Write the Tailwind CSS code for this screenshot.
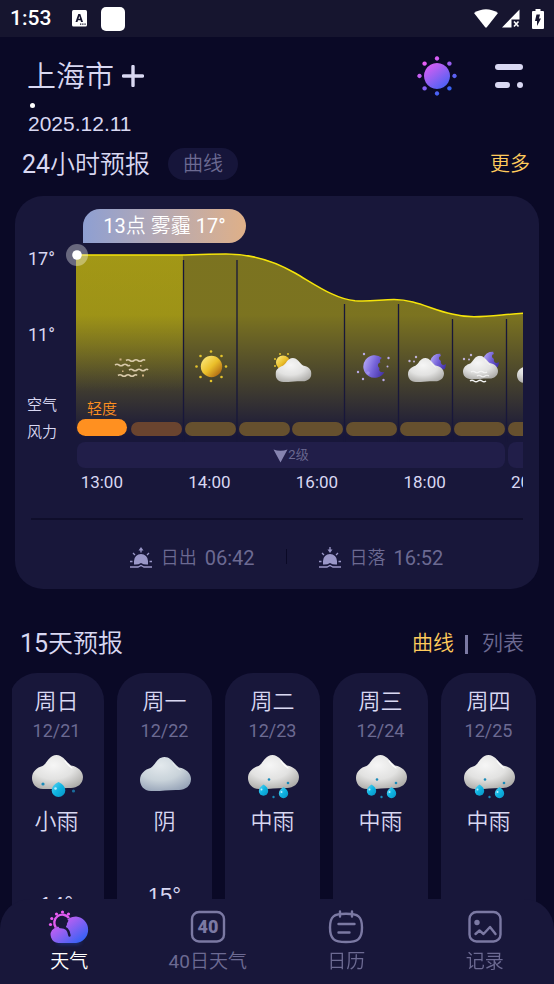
<!DOCTYPE html>
<html lang="zh-CN">
<head>
    <meta charset="UTF-8">
    <meta name="viewport" content="width=device-width, initial-scale=1.0">
    <title>天气</title>
    <script src="https://cdn.jsdelivr.net/npm/@tailwindcss/browser@4"></script>
</head>
<body class="bg-[#0a0926] text-[#d9d8f2] font-['Roboto','Noto_Sans_CJK_SC_DemiLight','Noto_Sans_CJK_SC',sans-serif]">

    <!-- Shared icons -->
    <svg class="absolute w-0 h-0" aria-hidden="true">
        <defs>
            <radialGradient id="cloudFill" cx="0.42" cy="0.3" r="0.75">
                <stop offset="0" stop-color="#f6f6f6"/>
                <stop offset="0.55" stop-color="#e2e2e1"/>
                <stop offset="1" stop-color="#aeadaa"/>
            </radialGradient>
            <radialGradient id="greyCloudFill" cx="0.4" cy="0.25" r="0.8">
                <stop offset="0" stop-color="#e3e9ed"/>
                <stop offset="0.55" stop-color="#c9d3da"/>
                <stop offset="1" stop-color="#97a4b8"/>
            </radialGradient>
            <linearGradient id="goldFill" x1="0.1" y1="0.1" x2="0.9" y2="0.9">
                <stop offset="0" stop-color="#fbe675"/>
                <stop offset="0.5" stop-color="#eabf2a"/>
                <stop offset="1" stop-color="#ad6412"/>
            </linearGradient>
            <linearGradient id="moonFill" x1="0" y1="0.3" x2="1" y2="0.7">
                <stop offset="0" stop-color="#b3a6f5"/>
                <stop offset="0.5" stop-color="#7563d8"/>
                <stop offset="1" stop-color="#4332a8"/>
            </linearGradient>
            <linearGradient id="dropFill" x1="0" y1="0" x2="1" y2="1">
                <stop offset="0" stop-color="#5fd4f2"/>
                <stop offset="0.5" stop-color="#0fb4e2"/>
                <stop offset="1" stop-color="#0893c4"/>
            </linearGradient>
            <linearGradient id="neon" gradientUnits="userSpaceOnUse" x1="8" y1="4" x2="32" y2="36">
                <stop offset="0" stop-color="#f25cf5"/>
                <stop offset="0.45" stop-color="#9a60f2"/>
                <stop offset="1" stop-color="#2c62f6"/>
            </linearGradient>
            <path id="cloudShape" d="M14 38C6.500 38 3 32 3 27C3 20.500 8 16.500 13.500 15C18.500 12 20 4 27.500 4C34 4 37 11 42 14.500C49 15.500 54 20.500 54 26C54 33 48 37 42 37C32 36.500 24 38.500 14 38Z"/>
            <symbol id="cloud" viewBox="3 4 51 34">
                <use href="#cloudShape" fill="url(#cloudFill)"/>
                <path d="M35 10c2 3 4 5 7 7" stroke="#fff" stroke-opacity=".7" stroke-linecap="round" fill="none"/>
            </symbol>
            <symbol id="lightRain" viewBox="0 0 56 48">
                <use href="#cloudShape" fill="url(#cloudFill)"/>
                <path d="M36 10c2 3 4 5 7 7" stroke="#fff" stroke-width="1.200" stroke-linecap="round" fill="none"/>
                <path d="M29.500 31c4.500 2 6.800 5 6.800 8.500a6.800 6.500 0 0 1-13.600 0c0-3.500 2.300-6.500 6.800-8.500z" fill="url(#dropFill)"/>
                <circle cx="26.500" cy="37.500" r="1.300" fill="#b8efff"/>
                <circle cx="14" cy="33" r="1.600" fill="#1a8ab8"/>
                <circle cx="44.500" cy="40" r="1.600" fill="#1a6d9c"/>
            </symbol>
            <symbol id="rain" viewBox="0 0 56 48">
                <use href="#cloudShape" fill="url(#cloudFill)"/>
                <path d="M36 10c2 3 4 5 7 7" stroke="#fff" stroke-width="1.200" stroke-linecap="round" fill="none"/>
                <path d="M18.500 33.500c3 2 4.700 4 4.700 6.500a4.700 4.700 0 0 1-9.400 0c0-2.500 1.700-4.500 4.700-6.500z" fill="url(#dropFill)"/>
                <path d="M38.500 36c3 2 4.700 4 4.700 6.500a4.700 4.700 0 0 1-9.400 0c0-2.500 1.700-4.500 4.700-6.500z" fill="url(#dropFill)"/>
                <circle cx="16.500" cy="38.500" r="1" fill="#b8efff"/>
                <circle cx="36.500" cy="41" r="1" fill="#b8efff"/>
                <circle cx="24" cy="28.500" r="1.300" fill="#1a8ab8"/>
                <circle cx="43" cy="32" r="1.300" fill="#1a8ab8"/>
                <circle cx="28.500" cy="46" r="1.200" fill="#1a8ab8"/>
            </symbol>
            <symbol id="overcast" viewBox="0 0 56 48">
                <use href="#cloudShape" y="2" fill="url(#greyCloudFill)"/>
                <path d="M36 12c2 3 4 5 7 7" stroke="#fff" stroke-opacity=".6" stroke-linecap="round" fill="none"/>
            </symbol>
            <symbol id="moon" viewBox="0 0 22 23">
                <path d="M19 3A11.300 11.300 0 1 0 21.500 17C17 18 15.500 15.500 16.500 13C14 11 14.500 8 17.500 7.500C16.500 5.500 17 4 19 3Z" fill="url(#moonFill)"/>
                <circle cx="5" cy="18" r="1.800" fill="#a89bf0" fill-opacity=".6"/>
            </symbol>
            <symbol id="crescent" viewBox="0 0 16 16">
                <path d="M10.500 0A10 10 0 0 0 0 8L6 16H14.500Q15.800 14 16 10.500Q13 12.500 11.500 10.500Q10.500 9 11 7.500Q8.500 6.500 9 4Q9.500 2.500 11 2.500Q10 1 10.500 0Z" fill="url(#moonFill)"/>
            </symbol>
        </defs>
    </svg>

    <div class="h-screen overflow-hidden">

        <!-- Status bar -->
        <div class="h-[37px] bg-[#16152f] text-white flex items-center pl-[10px] pr-[10px]">
            <span class="text-[21px] font-medium">1:53</span>
            <svg class="ml-[21px]" width="15" height="17" viewBox="0 0 15 17">
                <rect width="15" height="16.500" rx="1.500" fill="#fff"/>
                <path d="M3.500 12L6.300 4h2L11 12H9L8.500 10.300H6L5.500 12zM6.500 8.800h1.600L7.300 6z" fill="#16152f"/>
                <path d="M8 13.500h1.300v1.300H8zM10.200 13.500h1.300v1.300h-1.300zM12.400 13.500h1.300v1.300h-1.300z" fill="#16152f"/>
            </svg>
            <span class="ml-[14px] size-6 rounded-[5px] bg-white"></span>
            <div class="ml-auto flex items-center">
                <svg width="24" height="19" viewBox="0 0 24 19"><path d="M0 4Q12-3.500 24 4L12.800 18.300Q12 19 11.200 18.300Z" fill="#fff"/></svg>
                <svg class="ml-1" width="18" height="19" viewBox="0 0 18 19">
                    <path d="M17.500 0.500V10.500H9.500V18.500H0Z" fill="#fff"/>
                    <path d="M12 12.500l4.500 5M16.500 12.500l-4.500 5" stroke="#fff" stroke-width="1.600"/>
                </svg>
                <svg class="ml-3" width="12" height="20" viewBox="0 0 12 20">
                    <path d="M3.500 0h5v2H11a1 1 0 0 1 1 1v16a1 1 0 0 1-1 1H1a1 1 0 0 1-1-1V3a1 1 0 0 1 1-1h2.500z" fill="#fff"/>
                    <path d="M4.500 5.500h3.500L7 9.500h2L5 17V12H3z" fill="#16152f"/>
                </svg>
            </div>
        </div>

        <!-- City -->
        <header class="mt-[15px] h-12 pl-[27px] pr-[31px] flex items-center">
            <h1 class="pt-1 text-[29px]">上海市</h1>
            <button class="ml-2" aria-label="添加城市">
                <svg width="22" height="22" viewBox="0 0 22 22"><path d="M11 1.500v19M1.500 11h19" stroke="#d9d8f2" stroke-width="3.400" stroke-linecap="round"/></svg>
            </button>
            <button class="ml-auto" aria-label="主题">
                <svg width="40" height="40" viewBox="0 0 40 40" fill="url(#neon)">
                    <path d="M20 7a13 13 0 1 0 .01 0ZM20 .3a2.200 2.200 0 1 0 .01 0ZM20 35.300a2.200 2.200 0 1 0 .01 0ZM2.500 17.800a2.200 2.200 0 1 0 .01 0ZM37.500 17.800a2.200 2.200 0 1 0 .01 0ZM7.600 5.400a2.200 2.200 0 1 0 .01 0ZM32.400 5.400a2.200 2.200 0 1 0 .01 0ZM7.600 30.200a2.200 2.200 0 1 0 .01 0ZM32.400 30.200a2.200 2.200 0 1 0 .01 0Z"/>
                </svg>
            </button>
            <button class="ml-[38px]" aria-label="菜单">
                <svg width="28" height="24" viewBox="0 0 28 24" fill="#d9d8f2">
                    <rect width="28" height="6" rx="3"/><rect y="18" width="15" height="6" rx="3"/><rect x="22" y="18" width="6" height="6" rx="3"/>
                </svg>
            </button>
        </header>
        <div class="pl-7">
            <div class="mt-[3px] ml-0.5 size-[5px] rounded-full bg-white"></div>
            <p class="mt-1 text-[21px] leading-6 font-['Liberation_Sans',sans-serif]">2025.12.11</p>
        </div>

        <!-- 24 hours -->
        <div class="mt-3 h-8 pl-[22px] pr-6 flex items-center">
            <h2 class="pt-0.5 text-[25px]">24小时预报</h2>
            <button class="ml-[18px] h-8 px-[15px] rounded-full bg-[#16153a] text-xl text-[#6c6a92]">曲线</button>
            <a href="#" class="ml-auto text-xl text-[#ffcb5c]">更多</a>
        </div>

        <section class="mt-4 mx-[15px] pt-[13px] rounded-[28px] bg-[#18173a]">
            <div class="flex pr-4">
                <div class="w-12 shrink-0 pl-3 leading-6">
                    <div class="mt-[38px] pl-px text-lg leading-6 whitespace-nowrap">17°</div>
                    <div class="mt-[52px] pl-px text-lg leading-6 whitespace-nowrap">11°</div>
                    <div class="mt-[46px] text-[15px] leading-6">空气</div>
                    <div class="mt-[3px] text-[15px] leading-6">风力</div>
                </div>
                <div class="flex-1 min-w-0 overflow-hidden">
                    <div class="ml-5 w-[163px] h-[34px] rounded-[17px] rounded-bl-none bg-linear-to-r from-[#8e9fd2] to-[#dfb088] text-white text-xl flex items-center justify-center whitespace-nowrap">13点 雾霾 17°</div>
                    <svg class="max-w-none block" width="500" height="199" viewBox="0 0 500 199">
                        <defs>
                            <linearGradient id="area" gradientUnits="userSpaceOnUse" x1="0" y1="12" x2="0" y2="194">
                                <stop offset="0" stop-color="#f5e400" stop-opacity=".45"/>
                                <stop offset=".33" stop-color="#f5e400" stop-opacity=".45"/>
                                <stop offset="1" stop-color="#f5e400" stop-opacity="0"/>
                            </linearGradient>
                            <linearGradient id="areaNow" gradientUnits="userSpaceOnUse" x1="0" y1="12" x2="0" y2="194">
                                <stop offset="0" stop-color="#f5e400" stop-opacity=".32"/>
                                <stop offset=".33" stop-color="#f5e400" stop-opacity=".28"/>
                                <stop offset=".75" stop-color="#f5e400" stop-opacity="0"/>
                            </linearGradient>
                        </defs>
                        <path d="M13 12H110C130 12 145 11 163 11C192 11 214 19.500 232 30C252 41.500 272 56 292 57.800C308 58.800 318 56.500 331 56.500C353 56.500 369 67 389 71C397 73 404 73.800 411 73.800C428 73.800 440 71.500 460 70.300C480 69 490 68 500 68V194H13Z" fill="url(#area)"/>
                        <path d="M13 12H120V194H13Z" fill="url(#areaNow)"/>
                        <path d="M120.500 17V199M174 17V199M281.500 61V199M335.500 61V199M389.500 76V199M443.500 76V199" stroke="#18173a" stroke-width="1.300"/>
                        <path d="M13 12H110C130 12 145 11 163 11C192 11 214 19.500 232 30C252 41.500 272 56 292 57.800C308 58.800 318 56.500 331 56.500C353 56.500 369 67 389 71C397 73 404 73.800 411 73.800C428 73.800 440 71.500 460 70.300C480 69 490 68 500 68" fill="none" stroke="#f5e40a" stroke-width="1.500"/>
                        <circle cx="14" cy="12" r="11" fill="#fff" fill-opacity=".35"/>
                        <circle cx="14" cy="12" r="4.800" fill="#fff"/>

                        <!-- haze -->
                        <g stroke="#d8c9a8" stroke-width="1.600" fill="none">
                            <path d="M63 117.500q2-1.500 4 0t4 0t4 0t4 0t3 0M52 122q2-1.500 4 0t4 0t4 0t3 0M66 127q2-1.500 4 0t4 0t4 0t4 0t3 0M55 132.500q2-1.500 4 0t4 0t4 0t4 0t3 0"/>
                        </g>
                        <path d="M56.500 115.500h2v2h-2zM77 122h1.500v1.500h-1.500zM59 127.500h1.500v1.500h-1.500zM79 131.500h2v2h-2z" fill="#cdaf80"/>

                        <!-- sun -->
                        <circle cx="148.500" cy="123.500" r="10.700" fill="url(#goldFill)"/>
                        <g fill="#e3c32c">
                            <circle cx="148" cy="108.500" r="1.300"/><circle cx="148" cy="138" r="1.300"/><circle cx="133.500" cy="123.500" r="1.300"/><circle cx="163" cy="123.500" r="1.300"/>
                            <circle cx="137.500" cy="113" r="1.300"/><circle cx="158.500" cy="113" r="1.300"/><circle cx="137.500" cy="134" r="1.300"/><circle cx="158.500" cy="134" r="1.300"/>
                        </g>

                        <!-- partly cloudy -->
                        <circle cx="220" cy="119.500" r="7" fill="url(#goldFill)"/>
                        <g fill="#e3c32c"><circle cx="217" cy="111" r="1"/><circle cx="225" cy="111" r="1"/><circle cx="212" cy="116" r="1"/><circle cx="212" cy="123" r="1"/></g>
                        <use href="#cloud" x="212.500" y="115" width="36" height="24"/>

                        <!-- moon -->
                        <use href="#moon" x="300" y="112" width="22" height="23"/>
                        <g fill="#b9abe6"><circle cx="301" cy="111" r="1.200"/><circle cx="325.500" cy="115" r="1.200"/><circle cx="324.500" cy="123.500" r="1"/><circle cx="295" cy="129" r="1.200"/><circle cx="300" cy="136" r="1.200"/><circle cx="320.500" cy="137" r="1.200"/></g>

                        <!-- cloudy night -->
                        <use href="#crescent" x="367" y="110.500" width="16" height="16"/>
                        <g fill="#c0b2d8"><circle cx="346.500" cy="118" r="1.200"/><circle cx="351" cy="118.500" r="1"/><circle cx="353" cy="114" r="1.200"/></g>
                        <use href="#cloud" x="345" y="115" width="36" height="24"/>

                        <!-- hazy night -->
                        <use href="#crescent" x="420" y="108.500" width="16" height="16"/>
                        <g fill="#c0b2d8"><circle cx="401" cy="116" r="1.200"/><circle cx="406" cy="116.500" r="1"/><circle cx="408" cy="112" r="1.200"/></g>
                        <use href="#cloud" x="400" y="112.500" width="35" height="24"/>
                        <path d="M408 129q2-1.500 4 0t4 0t4 0t4 0M414 133q2-1.500 4 0t4 0t4 0" stroke="#fafafa" stroke-opacity=".8" stroke-width="1.200" fill="none"/>
                        <path d="M407 138q2-1.500 4 0t4 0t4 0t4 0" stroke="#f2f2f2" stroke-width="1.500" fill="none"/>

                        <use href="#cloud" x="454" y="116" width="36" height="24"/>

                        <!-- air quality -->
                        <text x="24" y="171" font-size="15" fill="#ff9020">轻度</text>
                        <rect x="14" y="176" width="50" height="17" rx="8.500" fill="#ff9020"/>
                        <rect x="68" y="179" width="51" height="14" rx="7" fill="#6a442f"/>
                        <g fill="#66502e">
                            <rect x="122" y="179" width="51" height="14" rx="7"/>
                            <rect x="176" y="179" width="51" height="14" rx="7"/>
                            <rect x="229" y="179" width="51" height="14" rx="7"/>
                            <rect x="283" y="179" width="51" height="14" rx="7"/>
                            <rect x="337" y="179" width="51" height="14" rx="7"/>
                            <rect x="391" y="179" width="51" height="14" rx="7"/>
                            <rect x="445" y="179" width="51" height="14" rx="7"/>
                        </g>
                    </svg>
                    <div class="ml-[14px] w-[640px] flex gap-[3px] text-[13px] text-[#6c6a92]">
                        <div class="w-[428px] h-[26px] rounded-lg bg-[#211e49] flex items-center justify-center">
                            <svg width="15" height="15" viewBox="0 0 15 15"><path d="M.5 1.500Q7.500 4 14.500 1.500L7.500 14.500Z" fill="#8684b0"/></svg>2级
                        </div>
                        <div class="w-[209px] h-[26px] rounded-lg bg-[#211e49]"></div>
                    </div>
                    <div class="-ml-[15px] w-[538px] h-[30px] grid grid-cols-5 items-center text-center text-[17px]">
                        <span>13:00</span><span>14:00</span><span>16:00</span><span>18:00</span><span>20:00</span>
                    </div>
                </div>
            </div>
            <div class="mt-[20px] mx-4 border-t-2 border-[#0f0e2b]"></div>
            <div class="h-[69px] pt-[6px] pl-[18px] flex items-center justify-center text-xl text-[#6c6a92]">
                <svg class="mr-2" width="24" height="21" viewBox="0 0 24 21" fill="#9a97c8">
                    <path d="M5 17V14a7 7 0 0 1 14 0V17.500Q15 18 12 16Q9 18 5 17.500Z"/>
                    <path d="M1 20H9L12 18.500l3 1.500h8M1 14.500h2.500M20.500 14.500H23M4 6l2 2M20 6l-2 2M12 2v3.500" stroke="#9a97c8" stroke-width="1.300" fill="none"/>
                    <path d="M9.500 3.500L12 0l2.500 3.500z"/>
                </svg>
                <span class="text-lg">日出</span><span class="ml-2">06:42</span>
                <span class="mx-[31px] mb-[3px] w-px h-[15px] bg-[#0a0926]"></span>
                <svg class="mr-2" width="24" height="21" viewBox="0 0 24 21" fill="#9a97c8">
                    <path d="M5 17V14a7 7 0 0 1 14 0V17.500Q15 18 12 16Q9 18 5 17.500Z"/>
                    <path d="M1 20H9L12 18.500l3 1.500h8M1 14.500h2.500M20.500 14.500H23M4 6l2 2M20 6l-2 2M12 0v3" stroke="#9a97c8" stroke-width="1.300" fill="none"/>
                    <path d="M9.500 2.500L12 6l2.500-3.500z"/>
                </svg>
                <span class="text-lg">日落</span><span class="ml-2">16:52</span>
            </div>
        </section>

        <!-- 15 days -->
        <div class="mt-[39px] h-8 pl-5 pr-[30px] flex items-center">
            <h2 class="text-[25px]">15天预报</h2>
            <button class="ml-auto text-[21px] text-[#ffcb5c]">曲线</button>
            <span class="mx-[11px] w-[3px] h-[19px] bg-[#7b79a3]"></span>
            <button class="ml-[3px] text-[21px] text-[#6c6a92]">列表</button>
        </div>

        <div class="mt-[13px] mx-3 overflow-hidden">
            <div class="-ml-[3px] w-[540px] flex gap-[13px] text-center text-[22px] leading-[30px]">
                <article class="w-[95px] h-[400px] pt-[14px] shrink-0 rounded-[28px] bg-[#18173a]">
                    <h3>周日</h3>
                    <p class="mt-0.5 text-lg leading-6 text-[#6c6a92]">12/21</p>
                    <svg class="mt-2 mx-auto" width="56" height="48"><use href="#lightRain"/></svg>
                    <p class="mt-2">小雨</p>
                    <p class="mt-[53px] font-['Liberation_Sans',sans-serif]">14°</p>
                </article>
                <article class="w-[95px] h-[400px] pt-[14px] shrink-0 rounded-[28px] bg-[#18173a]">
                    <h3>周一</h3>
                    <p class="mt-0.5 text-lg leading-6 text-[#6c6a92]">12/22</p>
                    <svg class="mt-2 mx-auto" width="56" height="48"><use href="#overcast"/></svg>
                    <p class="mt-2">阴</p>
                    <p class="mt-[44px] font-['Liberation_Sans',sans-serif]">15°</p>
                </article>
                <article class="w-[95px] h-[400px] pt-[14px] shrink-0 rounded-[28px] bg-[#18173a]">
                    <h3>周二</h3>
                    <p class="mt-0.5 text-lg leading-6 text-[#6c6a92]">12/23</p>
                    <svg class="mt-2 mx-auto" width="56" height="48"><use href="#rain"/></svg>
                    <p class="mt-2">中雨</p>
                </article>
                <article class="w-[95px] h-[400px] pt-[14px] shrink-0 rounded-[28px] bg-[#18173a]">
                    <h3>周三</h3>
                    <p class="mt-0.5 text-lg leading-6 text-[#6c6a92]">12/24</p>
                    <svg class="mt-2 mx-auto" width="56" height="48"><use href="#rain"/></svg>
                    <p class="mt-2">中雨</p>
                </article>
                <article class="w-[95px] h-[400px] pt-[14px] shrink-0 rounded-[28px] bg-[#18173a]">
                    <h3>周四</h3>
                    <p class="mt-0.5 text-lg leading-6 text-[#6c6a92]">12/25</p>
                    <svg class="mt-2 mx-auto" width="56" height="48"><use href="#rain"/></svg>
                    <p class="mt-2">中雨</p>
                </article>
            </div>
        </div>
    </div>

    <!-- Tab bar -->
    <nav class="fixed inset-x-0 bottom-0 h-[85px] pt-2.5 rounded-t-[30px] bg-[#18173a] grid grid-cols-4 text-[19px] leading-[30px] text-[#6c6a92]">
        <a href="#" class="flex flex-col items-center text-white">
            <svg width="42" height="38" viewBox="0 0 42 38">
                <defs>
                    <filter id="glow" x="-20%" y="-60%" width="140%" height="260%"><feGaussianBlur stdDeviation="2.500"/></filter>
                </defs>
                <path d="M10 30h22v4H10z" fill="#2c62f6" opacity=".6" filter="url(#glow)"/>
                <path d="M11 34A8 8 0 0 1 6 19.500Q11 15.500 17.500 18.500L19 15.500L17 13.500Q20.500 7.500 28 7.500A13.300 13.300 0 0 1 28 34Z" fill="url(#neon)"/>
                <path d="M9.500 17.500Q10 12 15.500 10.500Q19 10 20.500 11.500L17 18.500Z" fill="#18173a"/>
                <path d="M7.800 18.500A8 8 0 0 1 21 9" fill="none" stroke="#e05cf0" stroke-width="2.400"/>
                <path d="M12 18Q20.500 17.500 21.500 26.500" fill="none" stroke="#18173a" stroke-width="2.400" stroke-linecap="round"/>
                <g fill="#ea5cf2"><circle cx="2.500" cy="15.500" r="1.600"/><circle cx="3.800" cy="9.500" r="1.600"/><circle cx="8.500" cy="5" r="1.600"/><circle cx="14.500" cy="3" r="1.600"/><circle cx="20.500" cy="5" r="1.600"/></g>
            </svg>
            <span>天气</span>
        </a>
        <a href="#" class="flex flex-col items-center">
            <svg width="42" height="38" viewBox="0 0 42 38">
                <rect x="5" y="3" width="32" height="29.500" rx="7" fill="none" stroke="#7b79a3" stroke-width="2.400"/>
                <text x="21" y="24" text-anchor="middle" font-family="Roboto" font-size="18" font-weight="900" fill="#7b79a3">40</text>
            </svg>
            <span>40日天气</span>
        </a>
        <a href="#" class="flex flex-col items-center">
            <svg width="42" height="38" viewBox="0 0 42 38" fill="none" stroke="#7b79a3" stroke-width="2.400" stroke-linecap="round">
                <path d="M21 4.800C33 4.800 37 7 37 18.500S33 33 21 33S5 30 5 18.500S9 4.800 21 4.800Z"/>
                <path d="M15 2.500v5M27 2.500v5M13.500 15h16M13.500 23.500h11"/>
            </svg>
            <span>日历</span>
        </a>
        <a href="#" class="flex flex-col items-center">
            <svg width="42" height="38" viewBox="0 0 42 38" fill="none" stroke="#7b79a3" stroke-width="2.400" stroke-linecap="round" stroke-linejoin="round">
                <rect x="5.500" y="3" width="31" height="29.500" rx="7"/>
                <circle cx="13" cy="13.500" r="2.700" fill="#7b79a3" stroke="none"/>
                <path d="M11.500 25l4-3.500 4 3.500 6.500-7 5.500 7"/>
            </svg>
            <span>记录</span>
        </a>
    </nav>

</body>
</html>
